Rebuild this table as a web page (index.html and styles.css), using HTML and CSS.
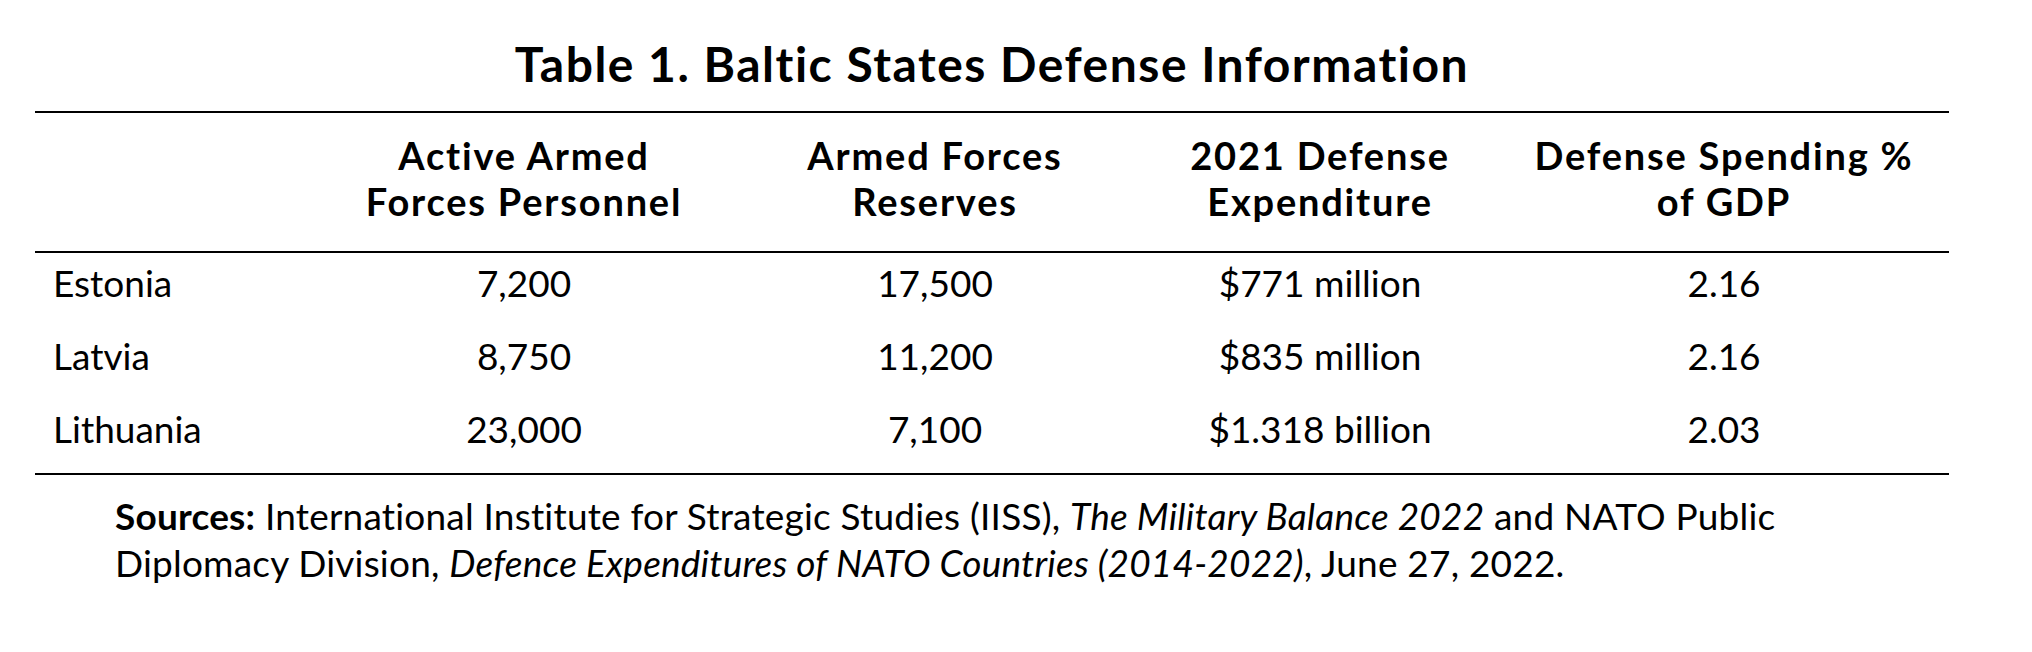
FILE: index.html
```html
<!DOCTYPE html>
<html lang="en">
<head>
<meta charset="utf-8">
<title>Table 1. Baltic States Defense Information</title>
<link rel="stylesheet" href="styles.css">
</head>
<body>
<main class="doc">
  <h1 class="title">Table 1. Baltic States Defense Information</h1>
  <table class="data">
    <colgroup>
      <col class="c-stub">
      <col class="c-1">
      <col class="c-2">
      <col class="c-3">
      <col class="c-4">
    </colgroup>
    <thead>
      <tr>
        <th class="stub"></th>
        <th>Active Armed<br>Forces Personnel</th>
        <th>Armed Forces<br>Reserves</th>
        <th>2021 Defense<br>Expenditure</th>
        <th>Defense Spending %<br>of GDP</th>
      </tr>
    </thead>
    <tbody>
      <tr class="first">
        <td class="stub">Estonia</td>
        <td>7,200</td>
        <td>17,500</td>
        <td>$771 million</td>
        <td>2.16</td>
      </tr>
      <tr>
        <td class="stub">Latvia</td>
        <td>8,750</td>
        <td>11,200</td>
        <td>$835 million</td>
        <td>2.16</td>
      </tr>
      <tr class="last">
        <td class="stub">Lithuania</td>
        <td>23,000</td>
        <td>7,100</td>
        <td>$1.318 billion</td>
        <td>2.03</td>
      </tr>
    </tbody>
  </table>
  <p class="sources"><b>Sources:</b> International Institute for Strategic Studies (IISS), <i>The Military Balance 2022</i> and NATO Public<br>Diplomacy Division, <i>Defence Expenditures of NATO Countries (2014-2022)</i>, June 27, 2022.</p>
</main>
</body>
</html>
```

FILE: styles.css
```css
html, body {
  margin: 0;
  padding: 0;
  background: #ffffff;
}

body {
  font-family: "Lato", "Liberation Sans", sans-serif;
  font-variant-ligatures: none;
  color: #000000;
  width: 2032px;
  height: 652px;
  overflow: hidden;
}

.doc {
  padding: 36px 0 0 35px;
  width: 1914px;
}

.title {
  margin: 0 0 19px 0;
  font-size: 48px;
  line-height: 56px;
  font-weight: 700;
  letter-spacing: 1.5px;
  text-align: center;
}

.data {
  width: 1914px;
  border-collapse: collapse;
  table-layout: fixed;
  font-size: 37px;
}

.c-stub { width: 284px; }
.c-1 { width: 410px; }
.c-2 { width: 412px; }
.c-3 { width: 358px; }
.c-4 { width: 450px; }

.data thead th {
  border-top: 2px solid #000;
  border-bottom: 2px solid #000;
  font-size: 38px;
  font-weight: 700;
  letter-spacing: 1.8px;
  line-height: 46px;
  padding: 19px 0 27px 0;
  text-align: center;
  vertical-align: top;
}

.data tbody td {
  line-height: 44px;
  padding: 14px 0 15px 0;
  text-align: center;
}

.data tbody tr.first td {
  padding-top: 8px;
}

.data tbody tr.last td {
  padding-bottom: 22px;
  border-bottom: 2px solid #000;
}

.data .stub {
  text-align: left;
  padding-left: 18px;
}

.sources {
  margin: 17px 0 0 80px;
  font-size: 37px;
  line-height: 47px;
  letter-spacing: 0.2px;
}

.sources b {
  font-weight: 700;
}
```
